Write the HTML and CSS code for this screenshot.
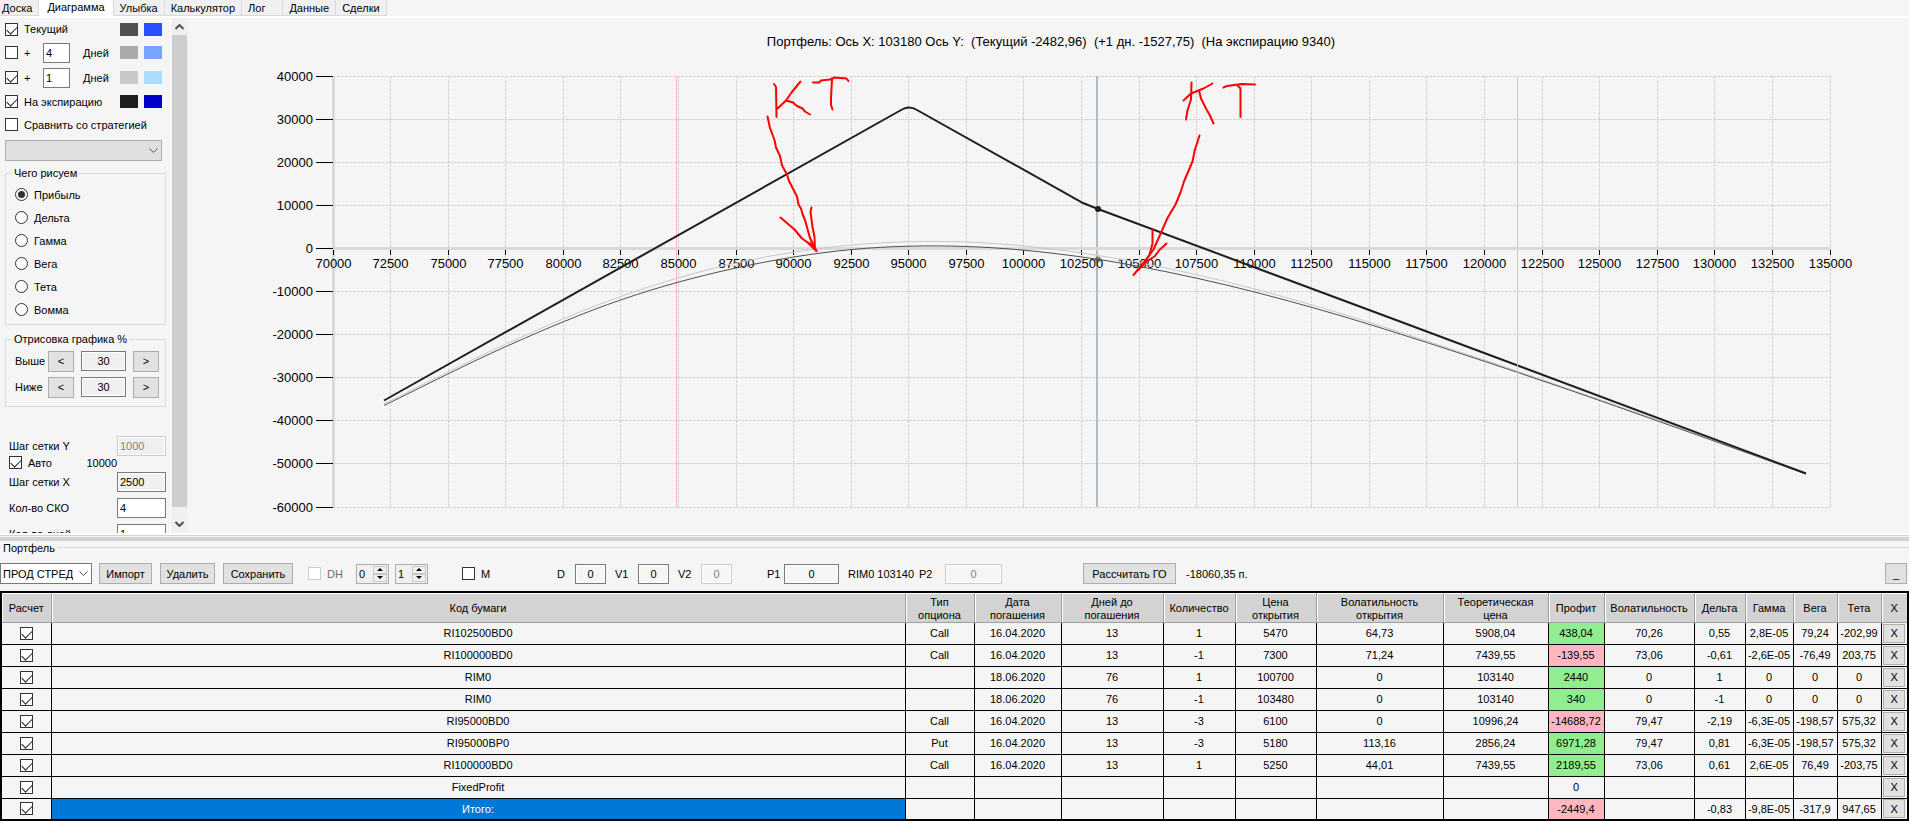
FILE: index.html
```html
<!DOCTYPE html>
<html lang="ru">
<head>
    <meta charset="UTF-8">
    <title>Диаграмма</title>
    <link rel="stylesheet" href="styles.css">
</head>
<body>
<!-- Вкладки -->
<nav class="tabs">
    <a href="#board">Доска</a>
    <a href="#chart" class="active">Диаграмма</a>
    <a href="#smile">Улыбка</a>
    <a href="#calc">Калькулятор</a>
    <a href="#log" class="wide">Лог</a>
    <a href="#data">Данные</a>
    <a href="#deals">Сделки</a>
</nav>

<div class="top">
    <!-- Настройки графика -->
    <div class="settings">
        <div class="line-row first">
            <input type="checkbox" id="current" checked>
            <label for="current">Текущий</label>
            <i class="swatch c-gray1"></i><i class="swatch c-blue1"></i>
        </div>
        <div class="line-row">
            <input type="checkbox" id="plus4">
            <label for="plus4">+</label>
            <input type="text" class="days" value="4" aria-label="Дней">
            <span class="unit">Дней</span>
            <i class="swatch c-gray2"></i><i class="swatch c-blue2"></i>
        </div>
        <div class="line-row">
            <input type="checkbox" id="plus1" checked>
            <label for="plus1">+</label>
            <input type="text" class="days" value="1" aria-label="Дней">
            <span class="unit">Дней</span>
            <i class="swatch c-gray3"></i><i class="swatch c-blue3"></i>
        </div>
        <div class="line-row short">
            <input type="checkbox" id="expiry" checked>
            <label for="expiry">На экспирацию</label>
            <i class="swatch c-gray4"></i><i class="swatch c-blue4"></i>
        </div>
        <div class="line-row short">
            <input type="checkbox" id="compare">
            <label for="compare">Сравнить со стратегией</label>
        </div>
        <div class="select-box strategy">
            <select disabled aria-label="Стратегия"><option></option></select>
            <svg width="9" height="6" viewBox="0 0 9 6"><path d="M0.5 0.5L4.5 4.5L8.5 0.5"/></svg>
        </div>

        <fieldset class="group what">
            <legend>Чего рисуем</legend>
            <label><input type="radio" name="what" checked>Прибыль</label>
            <label><input type="radio" name="what">Дельта</label>
            <label><input type="radio" name="what">Гамма</label>
            <label><input type="radio" name="what">Вега</label>
            <label><input type="radio" name="what">Тета</label>
            <label><input type="radio" name="what">Вомма</label>
        </fieldset>

        <fieldset class="group range">
            <legend>Отрисовка графика %</legend>
            <div class="range-row">
                <label for="above">Выше</label>
                <button type="button">&lt;</button>
                <input type="text" id="above" value="30" readonly>
                <button type="button">&gt;</button>
            </div>
            <div class="range-row">
                <label for="below">Ниже</label>
                <button type="button">&lt;</button>
                <input type="text" id="below" value="30" readonly>
                <button type="button">&gt;</button>
            </div>
        </fieldset>

        <div class="steps">
            <div class="step-row">
                <label for="stepY">Шаг сетки Y</label>
                <input type="text" id="stepY" value="1000" disabled>
            </div>
            <div class="auto-row">
                <input type="checkbox" id="auto" checked>
                <label for="auto">Авто</label>
                <span>10000</span>
            </div>
            <div class="step-row">
                <label for="stepX">Шаг сетки X</label>
                <input type="text" id="stepX" value="2500" readonly>
            </div>
            <div class="step-row">
                <label for="sko">Кол-во СКО</label>
                <input type="text" id="sko" value="4">
            </div>
            <div class="step-row">
                <label for="dayCount">Кол-во дней</label>
                <input type="text" id="dayCount" value="1">
            </div>
        </div>
    </div>

    <div class="scrollbar">
        <svg width="9" height="6" viewBox="0 0 9 6"><path d="M0.5 5L4.5 1L8.5 5"/></svg>
        <div class="thumb"></div>
        <svg width="9" height="6" viewBox="0 0 9 6"><path d="M0.5 1L4.5 5L8.5 1"/></svg>
    </div>

    <!-- График -->
    <div class="chart">
        <svg id="chart" viewBox="188 18 1721 510" preserveAspectRatio="xMinYMin meet"></svg>
    </div>
</div>

<div class="splitter"></div>

<!-- Портфель -->
<fieldset class="portfolio">
    <legend>Портфель</legend>
    <div class="toolbar">
        <div class="select-box strategy-list">
            <select aria-label="Портфель"><option>ПРОД СТРЕДЛ</option></select>
            <svg width="9" height="6" viewBox="0 0 9 6"><path d="M0.5 0.5L4.5 4.5L8.5 0.5"/></svg>
        </div>
        <button type="button" class="import">Импорт</button>
        <button type="button" class="delete">Удалить</button>
        <button type="button" class="save">Сохранить</button>
        <label class="check dh"><input type="checkbox" disabled>DH</label>
        <div class="spin">
            <input type="number" value="0" aria-label="DH от">
            <div class="arrows"><button type="button" aria-label="Больше"></button><button type="button" class="down" aria-label="Меньше"></button></div>
        </div>
        <div class="spin">
            <input type="number" value="1" aria-label="DH до">
            <div class="arrows"><button type="button" aria-label="Больше"></button><button type="button" class="down" aria-label="Меньше"></button></div>
        </div>
        <label class="check m"><input type="checkbox">M</label>
        <label class="field d">D<input type="text" value="0"></label>
        <label class="field">V1<input type="text" value="0"></label>
        <label class="field">V2<input type="text" value="0" disabled></label>
        <label class="field p1">P1<input type="text" value="0"></label>
        <span class="future">RIM0 103140</span>
        <label class="field p2">P2<input type="text" value="0" disabled></label>
        <button type="button" class="margin">Рассчитать ГО</button>
        <span class="result">-18060,35 п.</span>
        <button type="button" class="collapse">_</button>
    </div>

    <table>
        <colgroup>
            <col class="w-calc"><col><col class="w-type"><col class="w-date"><col class="w-days"><col class="w-count">
            <col class="w-open"><col class="w-vol-open"><col class="w-theor"><col class="w-profit"><col class="w-vol">
            <col class="w-delta"><col class="w-gamma"><col class="w-vega"><col class="w-vega"><col class="w-x">
        </colgroup>
        <thead>
        <tr>
            <th>Расчет</th>
            <th>Код бумаги</th>
            <th>Тип<br>опциона</th>
            <th>Дата<br>погашения</th>
            <th>Дней до<br>погашения</th>
            <th>Количество</th>
            <th>Цена<br>открытия</th>
            <th>Волатильность<br>открытия</th>
            <th>Теоретическая<br>цена</th>
            <th>Профит</th>
            <th>Волатильность</th>
            <th>Дельта</th>
            <th>Гамма</th>
            <th>Вега</th>
            <th>Тета</th>
            <th>X</th>
        </tr>
        </thead>
        <tbody>
        <tr>
            <td><input type="checkbox" checked aria-label="Расчет"></td>
            <td>RI102500BD0</td><td>Call</td><td>16.04.2020</td><td>13</td><td>1</td><td>5470</td><td>64,73</td><td>5908,04</td>
            <td class="plus">438,04</td><td>70,26</td><td>0,55</td><td>2,8E-05</td><td>79,24</td><td>-202,99</td>
            <td><button type="button">X</button></td>
        </tr>
        <tr>
            <td><input type="checkbox" checked aria-label="Расчет"></td>
            <td>RI100000BD0</td><td>Call</td><td>16.04.2020</td><td>13</td><td>-1</td><td>7300</td><td>71,24</td><td>7439,55</td>
            <td class="minus">-139,55</td><td>73,06</td><td>-0,61</td><td>-2,6E-05</td><td>-76,49</td><td>203,75</td>
            <td><button type="button">X</button></td>
        </tr>
        <tr>
            <td><input type="checkbox" checked aria-label="Расчет"></td>
            <td>RIM0</td><td></td><td>18.06.2020</td><td>76</td><td>1</td><td>100700</td><td>0</td><td>103140</td>
            <td class="plus">2440</td><td>0</td><td>1</td><td>0</td><td>0</td><td>0</td>
            <td><button type="button">X</button></td>
        </tr>
        <tr>
            <td><input type="checkbox" checked aria-label="Расчет"></td>
            <td>RIM0</td><td></td><td>18.06.2020</td><td>76</td><td>-1</td><td>103480</td><td>0</td><td>103140</td>
            <td class="plus">340</td><td>0</td><td>-1</td><td>0</td><td>0</td><td>0</td>
            <td><button type="button">X</button></td>
        </tr>
        <tr>
            <td><input type="checkbox" checked aria-label="Расчет"></td>
            <td>RI95000BD0</td><td>Call</td><td>16.04.2020</td><td>13</td><td>-3</td><td>6100</td><td>0</td><td>10996,24</td>
            <td class="minus">-14688,72</td><td>79,47</td><td>-2,19</td><td>-6,3E-05</td><td>-198,57</td><td>575,32</td>
            <td><button type="button">X</button></td>
        </tr>
        <tr>
            <td><input type="checkbox" checked aria-label="Расчет"></td>
            <td>RI95000BP0</td><td>Put</td><td>16.04.2020</td><td>13</td><td>-3</td><td>5180</td><td>113,16</td><td>2856,24</td>
            <td class="plus">6971,28</td><td>79,47</td><td>0,81</td><td>-6,3E-05</td><td>-198,57</td><td>575,32</td>
            <td><button type="button">X</button></td>
        </tr>
        <tr>
            <td><input type="checkbox" checked aria-label="Расчет"></td>
            <td>RI100000BD0</td><td>Call</td><td>16.04.2020</td><td>13</td><td>1</td><td>5250</td><td>44,01</td><td>7439,55</td>
            <td class="plus">2189,55</td><td>73,06</td><td>0,61</td><td>2,6E-05</td><td>76,49</td><td>-203,75</td>
            <td><button type="button">X</button></td>
        </tr>
        <tr>
            <td><input type="checkbox" checked aria-label="Расчет"></td>
            <td>FixedProfit</td><td></td><td></td><td></td><td></td><td></td><td></td><td></td>
            <td>0</td><td></td><td></td><td></td><td></td><td></td>
            <td><button type="button">X</button></td>
        </tr>
        <tr>
            <td><input type="checkbox" checked aria-label="Расчет"></td>
            <td class="selected">Итого:</td><td></td><td></td><td></td><td></td><td></td><td></td><td></td>
            <td class="minus">-2449,4</td><td></td><td>-0,83</td><td>-9,8E-05</td><td>-317,9</td><td>947,65</td>
            <td><button type="button">X</button></td>
        </tr>
        </tbody>
    </table>
</fieldset>

<script src="chart.js"></script>
</body>
</html>
```

FILE: styles.css
```css
* {
    box-sizing: border-box;
}

body {
    margin: 0;
    height: 100vh;
    display: flex;
    flex-direction: column;
    background-color: #f5f5f5;
    color: #000;
    font-family: "Liberation Sans", Arial, sans-serif;
    font-size: 11px;
    line-height: 14px;
    overflow: hidden;
}

input, select, button {
    font: inherit;
    color: inherit;
    margin: 0;
}

button {
    height: 21px;
    padding: 0;
    background-color: #e1e1e1;
    border: 1px solid #adadad;
}

input[type="text"] {
    height: 20px;
    padding: 0 2px;
    background-color: #fff;
    border: 1px solid #7a7a7a;
    border-radius: 0;
}

input[type="text"]:read-only {
    background-color: #f0f0f0;
    box-shadow: inset 0 0 0 1px #fff;
}

input[type="text"]:disabled {
    color: #838383;
    border-color: #ccc;
}

/* Флажки и переключатели */
input[type="checkbox"], input[type="radio"] {
    appearance: none;
    flex: none;
    width: 13px;
    height: 13px;
    background-color: #fff;
    border: 1px solid #333;
    position: relative;
}

input[type="radio"] {
    border-radius: 50%;
}

input[type="checkbox"]:disabled {
    border-color: #ccc;
}

input[type="checkbox"]:checked::after {
    content: "";
    position: absolute;
    left: 1px;
    top: 2px;
    width: 9px;
    height: 5px;
    border-left: 1px solid #222;
    border-bottom: 1px solid #222;
    transform: rotate(-45deg);
}

input[type="radio"]:checked::after {
    content: "";
    position: absolute;
    left: 2px;
    top: 2px;
    width: 7px;
    height: 7px;
    border-radius: 50%;
    background-color: #333;
}

.select-box {
    position: relative;
    height: 21px;
}

.select-box select {
    appearance: none;
    width: 100%;
    height: 100%;
    padding: 0 18px 0 2px;
    background-color: #fff;
    border: 1px solid #7a7a7a;
    border-radius: 0;
}

.select-box select:disabled {
    background-color: #dfdfdf;
    border-color: #adadad;
    opacity: 1;
}

.select-box svg {
    position: absolute;
    right: 4px;
    top: 8px;
    pointer-events: none;
}

.select-box path {
    fill: none;
    stroke: #555;
}

/* Вкладки */
.tabs {
    display: flex;
    flex: none;
    height: 18px;
    border-bottom: 2px solid #fff;
    background-color: #f5f5f5;
}

.tabs a {
    height: 16px;
    padding: 1px 6px 0;
    color: #000;
    text-decoration: none;
    white-space: nowrap;
    background-color: #f0f0f0;
    border-right: 1px solid #d9d9d9;
    border-bottom: 1px solid #d9d9d9;
}

.tabs a:first-child {
    padding-left: 2px;
}

.tabs .active {
    padding: 0 8px;
    background-color: #fff;
    border-bottom-color: #fff;
}

.tabs .wide {
    padding-right: 17px;
}

.top {
    display: flex;
    flex: 1;
    min-height: 0;
}

/* Левая панель */
.settings {
    flex: none;
    width: 171px;
    padding: 0 4px 0 5px;
    overflow: hidden;
    border-right: 1px solid #fff;
}

.line-row {
    display: flex;
    align-items: center;
    height: 25px;
    padding-right: 4px;
}

.line-row.first {
    height: 22px;
}

.line-row.short {
    height: 23px;
}

.line-row label {
    flex: 1;
    padding-left: 6px;
    white-space: nowrap;
}

.line-row .days {
    width: 27px;
}

.line-row .unit {
    width: 37px;
    margin-left: 13px;
}

.swatch {
    width: 18px;
    height: 13px;
}

.swatch + .swatch {
    margin-left: 6px;
}

.c-gray1 { background-color: #505050; }
.c-gray2 { background-color: #aaa; }
.c-gray3 { background-color: #c8c8c8; }
.c-gray4 { background-color: #1e1e1e; }
.c-blue1 { background-color: #2850ff; }
.c-blue2 { background-color: #78a5ff; }
.c-blue3 { background-color: #aadcff; }
.c-blue4 { background-color: #0000c8; }

.strategy {
    width: 157px;
    margin-top: 4px;
}

.group {
    min-width: 0;
    margin: 0;
    border: 1px solid #dcdcdc;
}

.group legend {
    margin-left: -3px;
    padding: 0 2px;
}

.what {
    margin-top: 5px;
    padding: 3px 9px;
}

.what label {
    display: flex;
    align-items: center;
    gap: 6px;
    height: 23px;
}

.range {
    margin-top: 7px;
    padding: 2px 6px 6px 9px;
}

.range-row {
    display: flex;
    align-items: center;
    height: 26px;
}

.range-row label {
    width: 33px;
}

.range-row button {
    width: 26px;
}

.range-row input {
    width: 45px;
    margin: 0 7px;
    text-align: center;
}

.steps {
    display: flex;
    flex-direction: column;
    gap: 6px;
    margin-top: 29px;
    padding-left: 4px;
}

.step-row, .auto-row {
    display: flex;
    flex: none;
    align-items: center;
    justify-content: space-between;
}

.step-row input {
    width: 49px;
}

.auto-row {
    align-items: flex-start;
    height: 16px;
    margin: -6px 0;
}

.auto-row label {
    flex: 1;
    padding-left: 6px;
}

.auto-row span {
    padding-right: 49px;
}

/* Полоса прокрутки */
.scrollbar {
    display: flex;
    flex: none;
    flex-direction: column;
    align-items: center;
    width: 17px;
    padding: 6px 1px;
    background-color: #f0f0f0;
}

.scrollbar svg {
    flex: none;
}

.scrollbar path {
    fill: none;
    stroke: #505050;
    stroke-width: 2;
}

.scrollbar .thumb {
    flex: 1;
    width: 100%;
    margin: 5px 0 14px;
    background-color: #cdcdcd;
}

/* График */
.chart {
    flex: 1;
    min-width: 0;
}

.chart svg {
    display: block;
    width: 100%;
    height: 100%;
    font-size: 13px;
}

.chart .title {
    text-anchor: middle;
    white-space: pre;
}

.chart .label-x {
    text-anchor: middle;
}

.chart .label-y {
    text-anchor: end;
}

.chart .grid {
    stroke: #d3d3d3;
    stroke-dasharray: 3 1;
}

.chart .axis {
    stroke: #d9d9d9;
    stroke-width: 3;
}

.chart .tick {
    stroke: #000;
}

.chart .sko {
    stroke: #ffb6c1;
}

.chart .price {
    stroke: #b0bcc6;
    stroke-width: 2;
}

.chart path {
    fill: none;
}

.chart .next {
    stroke: #c8c8c8;
}

.chart .now {
    stroke: #505050;
}

.chart .final {
    stroke: #1e1e1e;
    stroke-width: 2;
}

.chart .ink {
    stroke: #f00;
    stroke-width: 2;
    stroke-linecap: round;
    stroke-linejoin: round;
}

.splitter {
    flex: none;
    height: 8px;
    background-color: #d3d3d3;
    border-top: 2px solid #fff;
    box-shadow: inset 0 1px #d3d3d3, inset 0 2px #f5f5f5;
}

/* Портфель */
.portfolio {
    flex: none;
    min-width: 0;
    margin: 0;
    padding: 0;
    border: 0;
    border-top: 1px solid #dcdcdc;
}

.portfolio legend {
    margin-left: 1px;
    padding: 0 2px;
}

.toolbar {
    display: flex;
    align-items: center;
    height: 36px;
    padding: 2px 2px 0 0;
    white-space: nowrap;
}

.strategy-list {
    width: 92px;
    margin-right: 7px;
}

.import {
    width: 53px;
    margin-right: 8px;
}

.delete {
    width: 55px;
    margin-right: 8px;
}

.save {
    width: 70px;
    margin-right: 15px;
}

.check {
    display: flex;
    align-items: center;
    gap: 6px;
}

.dh {
    width: 48px;
    color: #6d6d6d;
}

.m {
    width: 95px;
    margin-left: 28px;
}

.spin {
    display: flex;
    width: 33px;
    height: 20px;
    margin-right: 6px;
    padding: 1px;
    border: 1px solid #adadad;
    background-color: #f0f0f0;
}

.spin input {
    appearance: textfield;
    flex: 1;
    width: 0;
    padding: 0 0 0 1px;
    border: 0;
    background-color: transparent;
}

.spin input::-webkit-inner-spin-button {
    display: none;
}

.arrows {
    display: flex;
    flex-direction: column;
    width: 14px;
}

.arrows button {
    display: flex;
    flex: 1;
    align-items: center;
    justify-content: center;
    height: auto;
    border-color: #c8c8c8;
    background-color: #f0f0f0;
}

.arrows button::before {
    content: "";
    border: 3px solid transparent;
    border-top-width: 0;
    border-bottom-color: #000;
}

.arrows .down::before {
    border-width: 3px 3px 0;
    border-top-color: #000;
}

.field {
    display: flex;
    align-items: center;
    justify-content: space-between;
    width: 54px;
    margin-right: 9px;
}

.field input[type="text"] {
    width: 31px;
    text-align: center;
    background-color: #f5f5f5;
    box-shadow: inset 0 0 0 1px #fff;
}

.field.d {
    width: 49px;
}

.field.p1 {
    width: 72px;
    margin-left: 26px;
}

.field.p1 input {
    width: 55px;
}

.future {
    width: 71px;
}

.field.p2 {
    width: 83px;
}

.field.p2 input {
    width: 57px;
}

.margin {
    width: 93px;
    margin: 0 10px 0 72px;
}

.collapse {
    width: 22px;
    margin-left: auto;
}

/* Таблица позиций */
table {
    width: 100%;
    table-layout: fixed;
    border-collapse: collapse;
    border: 2px solid #000;
    text-align: center;
}

th {
    height: 30px;
    padding: 3px 0 0;
    font-weight: normal;
    line-height: 13px;
    background-color: #d3d3d3;
    border-right: 1px solid #a0a0a0;
    border-bottom: 1px solid #a0a0a0;
    box-shadow: inset 1px 1px #fff;
}

td {
    height: 22px;
    padding: 0;
    white-space: nowrap;
    border: 1px solid #000;
}

td input[type="checkbox"] {
    display: block;
    margin: 0 auto;
}

td button {
    display: block;
    width: 22px;
    height: 19px;
    margin: 0 auto;
}

.w-calc { width: 50px; }
.w-type { width: 69px; }
.w-date { width: 87px; }
.w-days { width: 102px; }
.w-count { width: 72px; }
.w-open { width: 81px; }
.w-vol-open { width: 127px; }
.w-theor { width: 105px; }
.w-profit { width: 56px; }
.w-vol { width: 90px; }
.w-delta { width: 51px; }
.w-gamma { width: 48px; }
.w-vega { width: 44px; }
.w-x { width: 27px; }

.plus {
    background-color: #90ee90;
}

.minus {
    background-color: #ffb6c1;
}

.selected {
    color: #fff;
    background-color: #0078d7;
}
```

FILE: chart.js
```js
const svg = document.getElementById('chart');
const NS = 'http://www.w3.org/2000/svg';

// границы области построения
const plot = {left: 333, right: 1830, top: 76, bottom: 507};
const minX = 70000, maxX = 135000, stepX = 2500;
const minY = -60000, maxY = 40000, stepY = 10000;

function add(tag, cls, attrs, text) {
    const el = document.createElementNS(NS, tag);
    el.setAttribute('class', cls);
    for (const key in attrs) el.setAttribute(key, attrs[key]);
    if (text !== undefined) el.textContent = text;
    svg.appendChild(el);
}

function line(cls, x1, y1, x2, y2) {
    add('line', cls, {x1, y1, x2, y2});
}

// координаты по центру пикселя, чтобы линии были чёткими
function scaleX(x) {
    return Math.floor(plot.left + (x - minX) / (maxX - minX) * (plot.right - plot.left)) + 0.5;
}

function scaleY(y) {
    return Math.floor(plot.top + (maxY - y) / (maxY - minY) * (plot.bottom - plot.top)) + 0.5;
}

// плавная кривая через точки
function smooth(p) {
    let d = 'M' + p[0];
    for (let i = 0; i < p.length - 1; i++) {
        const a = p[i - 1] || p[i], b = p[i], c = p[i + 1], e = p[i + 2] || c;
        d += 'C' + [b[0] + (c[0] - a[0]) / 6, b[1] + (c[1] - a[1]) / 6,
            c[0] - (e[0] - b[0]) / 6, c[1] - (e[1] - b[1]) / 6, c[0], c[1]];
    }
    return d;
}

// сетка
for (let x = minX; x <= maxX; x += stepX) line('grid', scaleX(x), plot.top, scaleX(x), plot.bottom);
for (let y = minY; y <= maxY; y += stepY) line('grid', plot.left, scaleY(y), plot.right, scaleY(y));

// линия СКО и текущая цена
line('sko', 676.5, plot.top, 676.5, plot.bottom);
line('price', 1097, plot.top, 1097, plot.bottom);

// оси
line('axis', plot.left + 0.5, plot.top, plot.left + 0.5, plot.bottom);
line('axis', plot.left, 248.5, plot.right, 248.5);

for (let x = minX; x <= maxX; x += stepX) {
    line('tick', scaleX(x), 250, scaleX(x), 255);
    add('text', 'label-x', {x: scaleX(x), y: 268}, x);
}
for (let y = minY; y <= maxY; y += stepY) {
    line('tick', 316, scaleY(y), plot.left, scaleY(y));
    add('text', 'label-y', {x: 313, y: scaleY(y) + 4}, y);
}

const next = [[384, 404], [506, 344], [622, 296], [736, 263], [852, 245], [966, 242], [1082, 253],
    [1198, 275], [1314, 305.5], [1430, 342], [1546, 381], [1662, 421.5], [1806, 473]];
const now = [[384, 405.5], [506, 346.5], [622, 299.5], [736, 268], [852, 249.5], [966, 246.5], [1082, 257],
    [1198, 278.5], [1314, 308], [1430, 343.5], [1546, 382], [1662, 422.5], [1806, 474]];

add('path', 'next', {d: smooth(next)});
add('path', 'now', {d: smooth(now)});
add('path', 'final', {d: 'M384 400.5L902 109.5Q909.5 105.5 917 110L1083 203L1098 209L1396 320L1806 473.5'});
line('sko', 1517.5, plot.top, 1517.5, plot.bottom);

add('circle', '', {cx: 1098, cy: 259.5, r: 3, fill: '#505050', opacity: 0.7});
add('circle', '', {cx: 1098, cy: 209, r: 3, fill: '#1e1e1e'});

add('text', 'title', {x: 1051, y: 46},
    'Портфель: Ось X: 103180 Ось Y:  (Текущий -2482,96)  (+1 дн. -1527,75)  (На экспирацию 9340)');

// пометки от руки
[
    'M774 84L776 87L776.5 117M800.5 81.5L791.5 92.5L786 100.5L777 109M786 100.5L793 102.5L797 106L802.5 108.5L805 111.5L810 114.5',
    'M813 82.5L819 82.5L821 80.5L830 79.5L834.5 77.5L846.5 78.5L848.5 81M832 79.5L831 98L831 105L832.5 109.5',
    'M767.5 116.5L770 128L774.5 140L776 147.5L780 156L782 165.5L787 174.5L789 181L797 196.5L798.5 204.5L801 208.5L802.5 214L805 220L810 238L816.5 251',
    'M780.5 217.5L794.5 229.5L802 238.5L807 242L816.5 251M811.5 207.5L810.5 212L812.5 227L814.5 237L815 250L810 243',
    'M1191.5 82.5L1191 99.5L1187.5 110.5L1186 119.5M1212.5 83.5L1203.5 88.5L1191 93.5L1183.5 100.5M1199 90.5L1201 98.5L1206.5 109.5L1210 115.5L1213.5 123.5',
    'M1223.5 87.5L1227 86L1241.5 84L1255 84.5M1237.5 85.5L1240.5 88.5L1240.5 117',
    'M1199.5 135.5L1196.5 145L1195 149L1192.5 161.5L1184 181.5L1180.5 192.5L1175.5 204.5L1167.5 218L1160 235L1153.5 249.5L1145.5 260.5L1133.5 275',
    'M1152.5 229.5L1152.5 243.5L1149.5 255L1138.5 270M1166.5 243.5L1159.5 250L1154.5 256.5L1146.5 261.5L1138.5 269.5'
].forEach(d => add('path', 'ink', {d}));
```
